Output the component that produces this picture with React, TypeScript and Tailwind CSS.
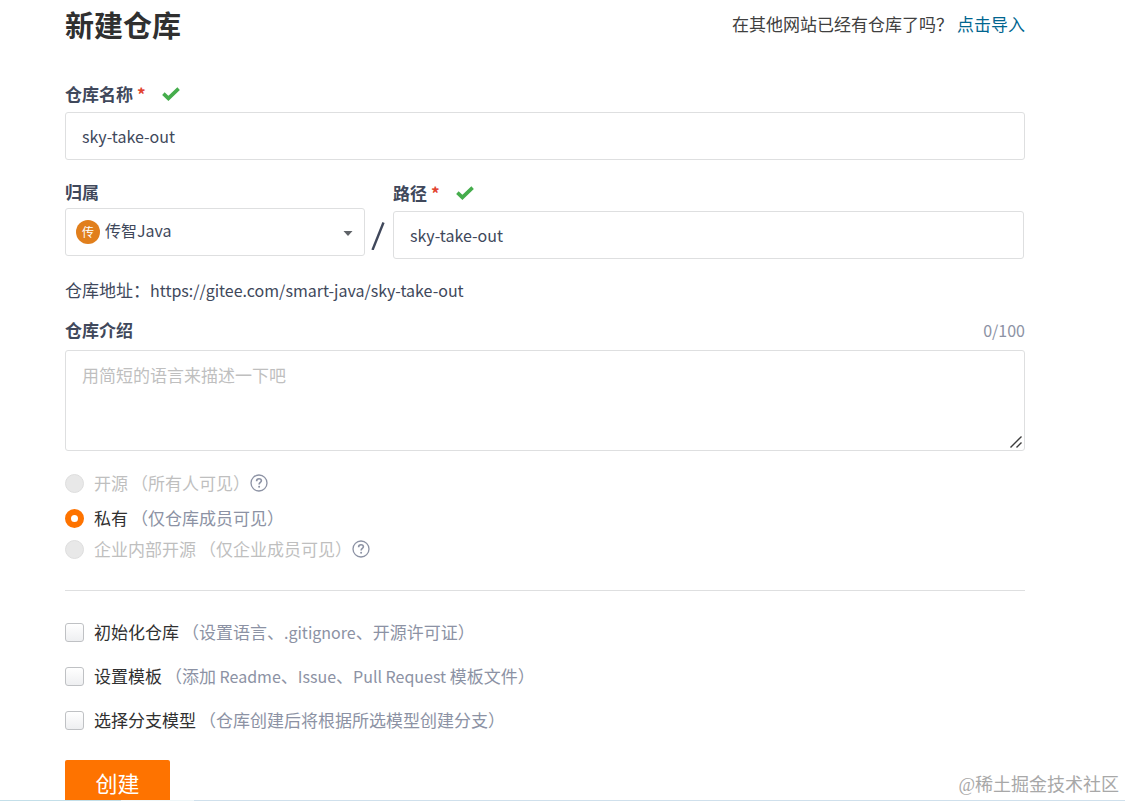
import { useState, ReactNode } from "react";

const visibilities = [
  { id: "public", name: "开源", hint: "（所有人可见）", disabled: true, help: true, gap: "mt-5" },
  { id: "private", name: "私有", hint: "（仅仓库成员可见）", disabled: false, help: false, gap: "mt-[11px]" },
  { id: "inner", name: "企业内部开源", hint: "（仅企业成员可见）", disabled: true, help: true, gap: "mt-[7px]" },
];

const options = [
  { id: "init", name: "初始化仓库", hint: <>（设置语言、<Latin>.gitignore</Latin>、开源许可证）</> },
  {
    id: "template",
    name: "设置模板",
    hint: <>（添加<Latin> Readme</Latin>、<Latin>Issue</Latin>、<Latin>Pull Request </Latin>模板文件）</>,
  },
  { id: "branch", name: "选择分支模型", hint: <>（仓库创建后将根据所选模型创建分支）</> },
];

const inputClass =
  "block w-full h-12 px-4 rounded-[3px] border border-[#dedfe0] bg-white text-[16px] text-[#40485b] outline-none focus:border-[#fe7300]";

// latin glyphs sit a little smaller than the chinese ones
function Latin({ children }: { children: ReactNode }) {
  return <span className="text-[16px]">{children}</span>;
}

function CheckMark() {
  return (
    <svg className="w-[18px] h-[14px] ml-4" viewBox="0 0 18 14" fill="none">
      <path d="M1.4 6.6 L6.4 11.4 L16.6 1.6" stroke="#45ad4c" strokeWidth="3.6" />
    </svg>
  );
}

function HelpIcon() {
  return (
    <svg className="w-[18px] h-[18px]" viewBox="0 0 18 18" fill="none" stroke="#8c92a4">
      <circle cx="9" cy="9" r="8" strokeWidth="1.3" />
      <path d="M6.6 7.2 C6.6 5.6 7.6 4.7 9 4.7 C10.5 4.7 11.4 5.6 11.4 6.8 C11.4 8.4 9.1 8.5 9.1 10.6" strokeWidth="1.6" />
      <circle cx="9.1" cy="12.8" r="1" fill="#8c92a4" stroke="none" />
    </svg>
  );
}

function FieldLabel({ htmlFor, required, children }: { htmlFor: string; required?: boolean; children: ReactNode }) {
  return (
    <div className="flex items-center h-6">
      <label htmlFor={htmlFor} className="font-bold text-[#40485b]">
        {children}
        {required && <span className="ml-1 text-[#e2432f]">*</span>}
      </label>
      {required && <CheckMark />}
    </div>
  );
}

export default function App() {
  const [name, setName] = useState("sky-take-out");
  const [path, setPath] = useState("sky-take-out");
  const [intro, setIntro] = useState("");
  const [visibility, setVisibility] = useState("private");

  return (
    <div className="relative h-screen overflow-hidden bg-white font-['Noto_Sans_CJK_SC',sans-serif] text-[17px] leading-6 text-[#40485b]">
      <form className="pl-[65px] pr-[100px]" onSubmit={(e) => e.preventDefault()}>
        <header className="flex items-center justify-between h-12">
          <h1 className="text-[29px] font-bold text-[#303030]">新建仓库</h1>
          <p className="flex text-[#404040]">
            在其他网站已经有仓库了吗？
            <a href="#import" className="ml-1 text-[#00658f]">点击导入</a>
          </p>
        </header>

        <div className="mt-[34px]">
          <FieldLabel htmlFor="name" required>仓库名称</FieldLabel>
          <input id="name" value={name} onChange={(e) => setName(e.target.value)} className={`mt-[6px] ${inputClass}`} />
        </div>

        <div className="flex mt-5">
          <div className="w-[300px]">
            <FieldLabel htmlFor="owner">归属</FieldLabel>
            <div className="relative mt-1">
              <select
                id="owner"
                className="block w-full h-12 pl-[39px] pb-1 pr-8 appearance-none rounded-[3px] border border-[#dedfe0] bg-white text-[16px] outline-none"
              >
                <option>传智Java</option>
              </select>
              <span className="absolute left-[11px] top-3 flex items-center justify-center w-6 h-6 rounded-full bg-[#e17f1c] text-white text-[12px] pointer-events-none">
                传
              </span>
              <svg className="absolute right-3 top-[23px] w-[10px] h-[5px] pointer-events-none" viewBox="0 0 10 5">
                <path d="M0.5 0 H9.5 L5 5 Z" fill="#5f6368" />
              </svg>
            </div>
          </div>
          <svg className="w-7 h-7 mt-[42px]" viewBox="0 0 28 28">
            <path d="M7.5 28 L18.5 0.5" stroke="#40485b" strokeWidth="2.4" />
          </svg>
          <div className="flex-1 pt-px pr-px">
            <FieldLabel htmlFor="path" required>路径</FieldLabel>
            <input id="path" value={path} onChange={(e) => setPath(e.target.value)} className={`mt-[6px] ${inputClass}`} />
          </div>
        </div>

        <p className="mt-[19px]">仓库地址：<Latin>https://gitee.com/smart-java/sky-take-out</Latin></p>

        <div className="mt-4">
          <div className="flex items-center justify-between">
            <FieldLabel htmlFor="intro">仓库介绍</FieldLabel>
            <span className="text-[16px] text-[#8c92a4]">{intro.length}/100</span>
          </div>
          <div className="relative mt-2">
            <textarea
              id="intro"
              maxLength={100}
              value={intro}
              onChange={(e) => setIntro(e.target.value)}
              placeholder="用简短的语言来描述一下吧"
              className="block w-full h-[101px] px-4 py-3 resize-none rounded-[3px] border border-[#dedfe0] outline-none placeholder:text-[#bfbfbf]"
            />
            <svg className="absolute right-[3px] bottom-[3px] w-3 h-3 pointer-events-none" viewBox="0 0 12 12" stroke="#3c3c3c" strokeWidth="1.4">
              <path d="M0.5 11.5 L11.5 0.5 M6.5 11.5 L11.5 6.5" />
            </svg>
          </div>
        </div>

        {visibilities.map((v) => (
          <div key={v.id} className={`flex items-center h-6 ${v.gap}`}>
            <input
              type="radio"
              id={v.id}
              name="visibility"
              disabled={v.disabled}
              checked={visibility === v.id}
              onChange={() => setVisibility(v.id)}
              className="w-[19px] h-[19px] appearance-none rounded-full border border-[#dedede] bg-[#e8e8e8] checked:border-[6px] checked:border-[#fe7300] checked:bg-white"
            />
            <label htmlFor={v.id} className={`ml-[10px] ${v.disabled ? "text-[#bfbfbf]" : "text-[#303030]"}`}>
              {v.name}
              <span className={`ml-[3px] ${v.disabled ? "" : "text-[#8c92a4]"}`}>{v.hint}</span>
            </label>
            {v.help && <HelpIcon />}
          </div>
        ))}

        <hr className="mt-[29px] border-[#dedfe0]" />

        <div className="flex flex-col gap-5 mt-[29px]">
          {options.map((o) => (
            <div key={o.id} className="flex items-center h-6">
              <input
                type="checkbox"
                id={o.id}
                className="w-[19px] h-[19px] appearance-none rounded-[3px] border border-[#bfc1c4] bg-linear-to-b from-white to-[#eeeff1] checked:bg-[#fe7300]"
              />
              <label htmlFor={o.id} className="ml-[10px] text-[#303030]">
                {o.name}
                <span className="ml-[3px] text-[#8c92a4]">{o.hint}</span>
              </label>
            </div>
          ))}
        </div>

        <button type="submit" className="block mt-7 w-[105px] h-12 pb-1 rounded-[2px] bg-[#fe7300] text-white text-[22px]">
          创建
        </button>
      </form>

      <span className="absolute right-[6px] bottom-1 font-['Liberation_Serif','Noto_Sans_CJK_SC',serif] text-[18px] text-[#a8a8a8]">
        @稀土掘金技术社区
      </span>
      <div className="absolute inset-x-0 bottom-0 flex h-px">
        <div className="w-[121px] bg-[#c3dfe9]" />
        <div className="w-[73px] bg-[#edf6f9]" />
        <div className="flex-1 bg-[#cfe0ec]" />
      </div>
    </div>
  );
}
